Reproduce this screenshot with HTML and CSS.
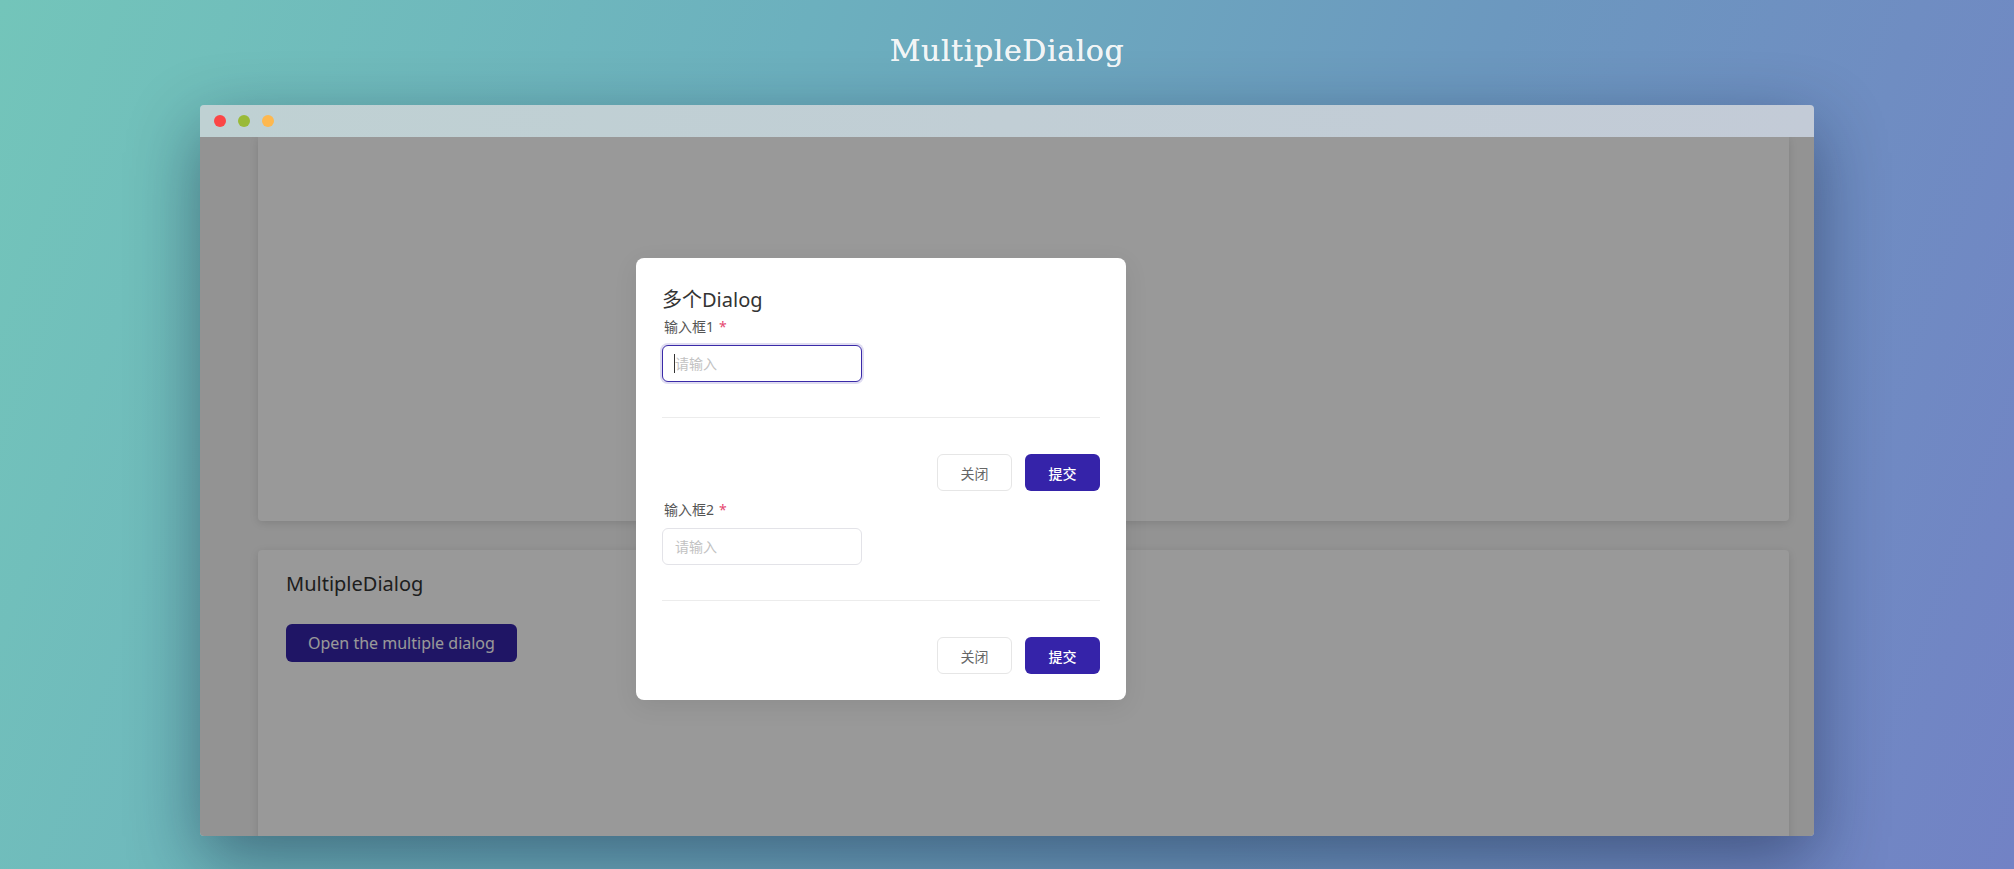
FILE: index.html
```html
<!DOCTYPE html>
<html lang="zh-CN">
<head>
<meta charset="utf-8">
<title>MultipleDialog</title>
<link rel="stylesheet" href="styles.css">
</head>
<body>
<h1 class="page-title">MultipleDialog</h1>
<div class="window">
  <div class="titlebar">
    <span class="dot dot-red"></span>
    <span class="dot dot-green"></span>
    <span class="dot dot-yellow"></span>
  </div>
  <div class="viewport">
    <div class="page">
      <section class="card card-top"></section>
      <section class="card card-demo">
        <h2 class="card-title">MultipleDialog</h2>
        <button class="btn-primary" type="button">Open the multiple dialog</button>
      </section>
    </div>
    <div class="mask"></div>
    <div class="dialog">
      <h3 class="dialog-title">多个Dialog</h3>
      <form class="form">
        <label class="form-label">输入框1<span class="required">*</span></label>
        <div class="input-wrap">
          <input class="input input-focused" type="text" placeholder="请输入">
          <span class="caret"></span>
        </div>
        <div class="form-footer">
          <button class="btn btn-default" type="button">关闭</button>
          <button class="btn btn-submit" type="button">提交</button>
        </div>
      </form>
      <form class="form">
        <label class="form-label">输入框2<span class="required">*</span></label>
        <div class="input-wrap">
          <input class="input" type="text" placeholder="请输入">
        </div>
        <div class="form-footer">
          <button class="btn btn-default" type="button">关闭</button>
          <button class="btn btn-submit" type="button">提交</button>
        </div>
      </form>
    </div>
  </div>
</div>
</body>
</html>
```

FILE: styles.css
```css
html, body {
  margin: 0;
  padding: 0;
}

body {
  height: 869px;
  overflow: hidden;
  font-family: "Noto Sans", "Noto Sans CJK SC", sans-serif;
  background: linear-gradient(110deg, #73c5ba 0%, #6cb0be 35%, #6c98bf 65%, #7282c5 100%);
}

.page-title {
  margin: 33px 0 0;
  font-family: "DejaVu Serif", serif;
  font-size: 30px;
  line-height: 36px;
  font-weight: 400;
  letter-spacing: 0.6px;
  text-align: center;
  color: #f1f5f6;
  text-shadow: 0 0 0.5px #f1f5f6;
}

.window {
  width: 1614px;
  margin: 36px auto 0;
  border-radius: 4px;
  overflow: hidden;
  box-shadow: 0 24px 70px rgba(10, 20, 50, 0.45);
}

.titlebar {
  height: 32px;
  display: flex;
  align-items: center;
  gap: 12px;
  padding-left: 14px;
  background: linear-gradient(to right, #bfd1d3, #c3cbd7);
}

.dot {
  width: 12px;
  height: 12px;
  border-radius: 50%;
}

.dot-red { background: #fb4646; }
.dot-green { background: #99ba37; }
.dot-yellow { background: #fdb84f; }

.viewport {
  position: relative;
  height: 699px;
  overflow: hidden;
  background: #f5f5f5;
}

.page {
  display: flex;
  flex-direction: column;
  gap: 29px;
  padding: 0 25px 0 58px;
}

.card {
  background: #fff;
  border-radius: 4px;
  box-shadow: 0 2px 8px rgba(0, 0, 0, 0.12);
}

.card-top {
  height: 384px;
  border-top-left-radius: 0;
  border-top-right-radius: 0;
}

.card-demo {
  height: 400px;
  padding: 20px 28px;
}

.card-title {
  margin: 0;
  font-size: 20px;
  line-height: 28px;
  font-weight: 400;
  color: #333;
}

.btn-primary {
  margin-top: 26px;
  height: 38px;
  padding: 0 22px;
  border: 0;
  border-radius: 6px;
  background: #3523a9;
  color: #fff;
  font-family: inherit;
  font-size: 16px;
}

.mask {
  position: absolute;
  inset: 0;
  background: rgba(0, 0, 0, 0.4);
}

.dialog {
  position: absolute;
  left: 436px;
  top: 121px;
  width: 490px;
  box-sizing: border-box;
  padding: 28px 26px 26px;
  background: #fff;
  border-radius: 8px;
  box-shadow: 0 6px 24px rgba(0, 0, 0, 0.08);
}

.dialog-title {
  margin: 0 0 3px;
  font-size: 20px;
  line-height: 28px;
  font-weight: 400;
  color: #333;
}

.form {
  margin: 0;
}

.form + .form {
  margin-top: 9px;
}

.form-label {
  display: block;
  font-size: 14px;
  line-height: 20px;
  color: #555;
  padding-left: 2px;
}

.required {
  margin-left: 5px;
  color: #e5486f;
}

.input-wrap {
  position: relative;
  width: 200px;
  margin-top: 8px;
}

.input {
  display: block;
  width: 200px;
  height: 37px;
  box-sizing: border-box;
  padding: 0 12px;
  border: 1px solid #e3e3e8;
  border-radius: 6px;
  outline: none;
  font-family: inherit;
  font-size: 14px;
  color: #333;
  background: #fff;
}

.input::placeholder {
  color: #c2c2c2;
}

.input-focused {
  border-color: #3a2aa8;
  box-shadow: 0 0 0 2px rgba(53, 35, 169, 0.16);
}

.caret {
  position: absolute;
  left: 12px;
  top: 9px;
  width: 1px;
  height: 19px;
  background: #333;
}

.form-footer {
  display: flex;
  justify-content: flex-end;
  gap: 13px;
  margin-top: 35px;
  padding-top: 36px;
  border-top: 1px solid #ececec;
}

.btn {
  width: 75px;
  height: 37px;
  border-radius: 6px;
  font-family: inherit;
  font-size: 14px;
  padding: 0;
}

.btn-default {
  background: #fff;
  border: 1px solid #e6e6e6;
  color: #666;
}

.btn-submit {
  background: #3523a9;
  border: 0;
  color: #fff;
  font-weight: 500;
}
```
